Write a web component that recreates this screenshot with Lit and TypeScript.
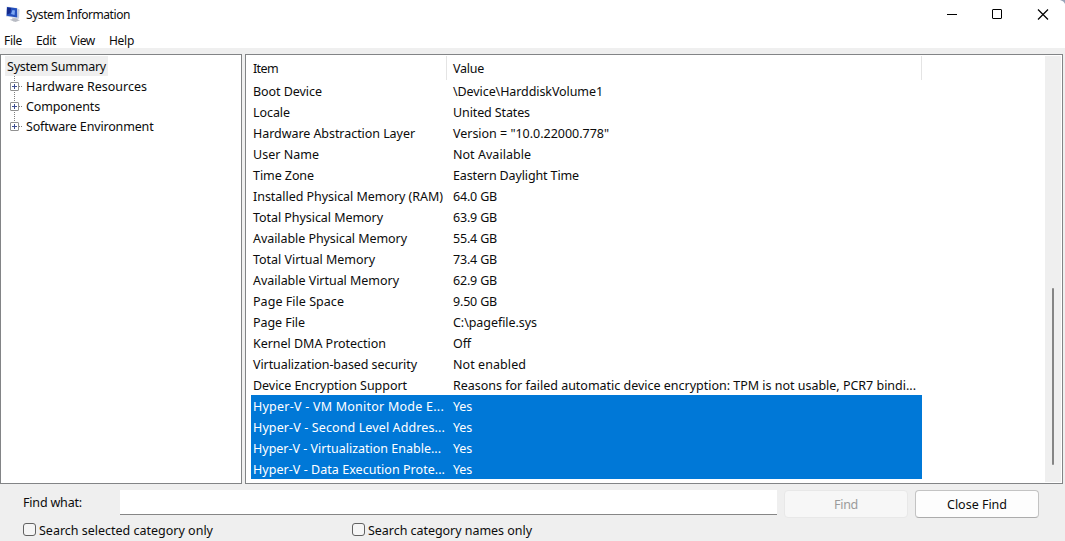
import { LitElement, html, css, svg } from "lit";
import { customElement, property } from "lit/decorators.js";
import { classMap } from "lit/directives/class-map.js";

type Text = [string, number];

const rows: [Text, Text, boolean?][] = [
  [["Boot Device", 69], ["\\Device\\HarddiskVolume1", 150]],
  [["Locale", 37], ["United States", 77]],
  [["Hardware Abstraction Layer", 162], ['Version = "10.0.22000.778"', 156]],
  [["User Name", 66], ["Not Available", 78]],
  [["Time Zone", 61], ["Eastern Daylight Time", 126]],
  [["Installed Physical Memory (RAM)", 190], ["64.0 GB", 44]],
  [["Total Physical Memory", 130], ["63.9 GB", 44]],
  [["Available Physical Memory", 154], ["55.4 GB", 44]],
  [["Total Virtual Memory", 122], ["73.4 GB", 44]],
  [["Available Virtual Memory", 146], ["62.9 GB", 44]],
  [["Page File Space", 91], ["9.50 GB", 44]],
  [["Page File", 52], ["C:\\pagefile.sys", 84]],
  [["Kernel DMA Protection", 133], ["Off", 18]],
  [["Virtualization-based security", 164], ["Not enabled", 73]],
  [["Device Encryption Support", 154], ["Reasons for failed automatic device encryption: TPM is not usable, PCR7 bindi...", 463]],
  [["Hyper-V - VM Monitor Mode E...", 191], ["Yes", 19], true],
  [["Hyper-V - Second Level Addres...", 192], ["Yes", 19], true],
  [["Hyper-V - Virtualization Enable...", 188], ["Yes", 19], true],
  [["Hyper-V - Data Execution Prote...", 192], ["Yes", 19], true],
];

const nodes: Text[] = [["Hardware Resources", 121], ["Components", 74], ["Software Environment", 127.5]];

/** A label whose letter spacing is set so that it runs to a given width. */
@customElement("fit-text")
export class FitText extends LitElement {
  static styles = css`
    :host { display: inline-block; white-space: nowrap; }
  `;
  @property() text = "";
  @property({ type: Number }) width = 0;

  firstUpdated() {
    const natural = this.getBoundingClientRect().width;
    this.style.letterSpacing = `${(this.width - natural) / this.text.length}px`;
  }
  render() {
    return html`${this.text}`;
  }
}

const fit = ([text, width]: Text) => html`<fit-text .text=${text} .width=${width}></fit-text>`;

@customElement("app-root")
export class AppRoot extends LitElement {
  static styles = css`
    * { box-sizing: border-box; }
    :host {
      display: flex; flex-direction: column; width: 1065px; height: 541px; overflow: hidden;
      background: #efefef; color: #0c0c0c; font: 12.5px/20px "Noto Sans", sans-serif; white-space: nowrap;
    }
    svg { display: block; flex: none; }
    .title { display: flex; align-items: center; height: 30px; background: #fff; padding-left: 5px; font-size: 12px; }
    .title .name { flex: 1; padding-left: 5px; }
    .menu { display: flex; height: 18px; background: #fff; line-height: 21px; font-size: 12px; padding-left: 4px; }
    .menu .file { width: 32px; }
    .menu .edit { width: 34px; }
    .menu .view { width: 39px; }
    .panes { display: flex; gap: 3px; height: 430px; margin-top: 6px; }
    .tree { width: 242px; border: 1px solid #828486; background: #fff; padding: 1px 0 0 4px; line-height: 22px; }
    .root { width: 103px; height: 20px; background: #efefef; padding-left: 2px; }
    .node { display: flex; height: 20px; }
    .node svg { margin-right: 4px; }
    .list { display: flex; width: 818px; border: 1px solid #828486; background: #fff; padding: 1px 1px 1px 5px; }
    .table { width: 671px; }
    .head { display: flex; height: 24px; line-height: 25px; }
    .head div { border-right: 1px solid #e4e4e4; }
    .item { width: 196px; padding-left: 2px; }
    .value { width: 475px; padding-left: 6px; }
    .row { display: flex; height: 21px; line-height: 23px; }
    .on { background: #0078d7; color: #fff; }
    .bar { width: 16px; background: #efefef; margin-left: auto; padding: 232px 0 0 7px; }
    .thumb { width: 2px; height: 177px; background: #858585; border-radius: 1px; }
    .find { display: flex; height: 28px; margin-top: 6px; }
    .label { width: 120px; padding-left: 23px; line-height: 26px; }
    .input { width: 657px; height: 25px; background: #fff; border-bottom: 1px solid #868686; }
    .btn { width: 124px; height: 28px; margin-left: 7px; border: 1px solid #c3c3c3; border-bottom-color: #acacac; border-radius: 4px; background: #fdfdfd; text-align: center; line-height: 28px; }
    .off { color: #9b9b9b; background: #f7f7f7; border-color: #e8e8e8; }
    .checks { display: flex; margin-top: 3px; padding-left: 23px; }
    .check { display: flex; width: 329px; }
    .box { width: 13px; height: 13px; border: 1px solid #626262; border-radius: 3px; background: #f5f5f5; margin: 2px 3px 0 0; }
  `;

  private node(label: Text, last: boolean) {
    return html`<div class="node">
      <svg width="17" height="20" viewBox="0 0 17 20" fill="none">
        <path d="M9.5 0V6M14 10.5H17" stroke="#808080" stroke-dasharray="1 1"/>
        <rect x="5.5" y="6.5" width="8" height="8" rx=".5" fill="#fff" stroke="#919191"/>
        <path d="M7 10.5H12M9.5 8V13" stroke="#3f4f91"/>
        ${last ? null : svg`<path d="M9.5 16V20" stroke="#808080" stroke-dasharray="1 1"/>`}
      </svg>${fit(label)}</div>`;
  }

  render() {
    return html`
      <div class="title">
        <svg width="16" height="18" viewBox="0 0 16 18">
          <path d="M11.500 2l3 1.500-.5 9-2 .5z" fill="#c3cde0"/>
          <path d="M7 11.500h5l1 3-5 1z" fill="#c6c9cf"/>
          <path d="M1.500 .5l11 1.500.5 10.500L1 10.500z" fill="#d7deea"/>
          <path d="M2 1l10 1.300.3 9.200L1.500 9.800z" fill="#2450bd"/>
          <path d="M2.200 1.500l4 .5L5.500 7 2 8.500z" fill="#14298a"/>
          <path d="M6 8l1.500-4 2.500.5-.5 4.500z" fill="#7ea8f2"/>
          <path d="M4.500 13.800l5.500-1.300 5 1.800-4.500 1.700z" fill="#b9bcc4"/>
        </svg>
        <span class="name">${fit(["System Information", 104])}</span>
        <svg width="119" height="30" viewBox="0 0 119 30" fill="none" stroke="#000" stroke-width="1">
          <path d="M1 14.500H11"/><rect x="46.500" y="9.500" width="9" height="9" rx=".5"/>
          <path d="M92 9.500L102 19.500M102 9.500L92 19.500" stroke-width="1.200"/>
          <path d="M114 0Q118 1 119 4V0z" fill="#98a4b8" stroke="none"/>
        </svg>
      </div>
      <div class="menu">
        <span class="file">${fit(["File", 18])}</span><span class="edit">${fit(["Edit", 20])}</span><span class="view">${fit(["View", 25])}</span><span>${fit(["Help", 25])}</span>
      </div>
      <div class="panes">
        <div class="tree">
          <div class="root">${fit(["System Summary", 99])}</div>
          ${nodes.map((n, i) => this.node(n, i === nodes.length - 1))}
        </div>
        <div class="list">
          <div class="table">
            <div class="head"><div class="item">${fit(["Item", 25])}</div><div class="value">${fit(["Value", 31])}</div></div>
            ${rows.map(([k, v, on]) => html`<div class=${classMap({ row: true, on: !!on })}><div class="item">${fit(k)}</div><div class="value">${fit(v)}</div></div>`)}
          </div>
          <div class="bar"><div class="thumb"></div></div>
        </div>
      </div>
      <div class="find">
        <div class="label">${fit(["Find what:", 59])}</div><div class="input"></div>
        <div class="btn off">${fit(["Find", 24])}</div><div class="btn">${fit(["Close Find", 60])}</div>
      </div>
      <div class="checks">
        <div class="check"><span class="box"></span>${fit(["Search selected category only", 174])}</div>
        <div class="check"><span class="box"></span>${fit(["Search category names only", 164])}</div>
      </div>`;
  }
}
